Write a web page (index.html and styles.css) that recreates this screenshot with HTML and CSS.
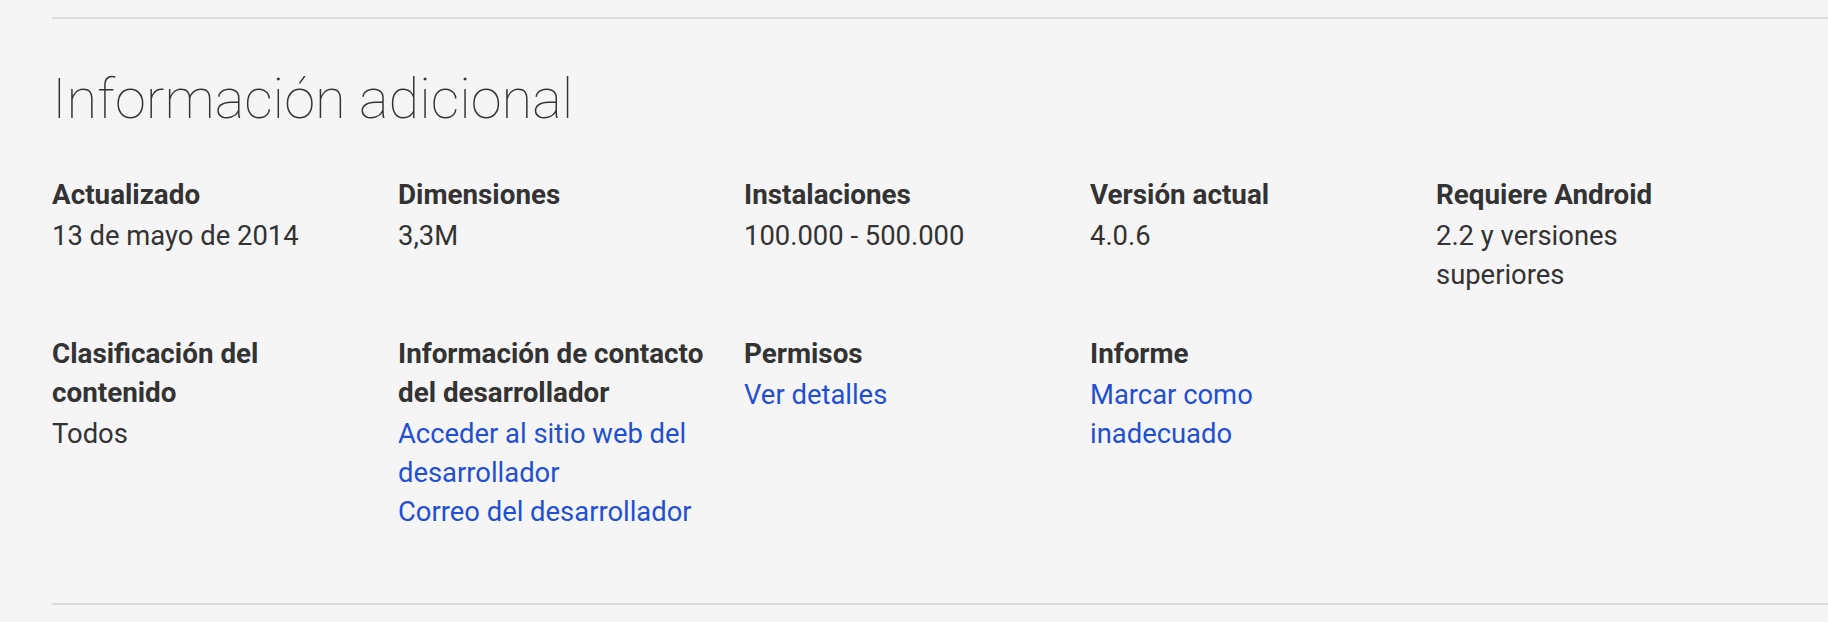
FILE: index.html
```html
<!DOCTYPE html>
<html lang="es">
<head>
<meta charset="utf-8">
<title>Información adicional</title>
<link rel="stylesheet" href="styles.css">
</head>
<body>
<section class="details">
  <div class="rule"></div>
  <h2 class="title">Información adicional</h2>
  <div class="meta-grid">
    <div class="meta">
      <div class="meta-title">Actualizado</div>
      <div class="meta-value">13 de mayo de 2014</div>
    </div>
    <div class="meta">
      <div class="meta-title">Dimensiones</div>
      <div class="meta-value">3,3M</div>
    </div>
    <div class="meta">
      <div class="meta-title">Instalaciones</div>
      <div class="meta-value">100.000 - 500.000</div>
    </div>
    <div class="meta">
      <div class="meta-title">Versión actual</div>
      <div class="meta-value">4.0.6</div>
    </div>
    <div class="meta">
      <div class="meta-title">Requiere Android</div>
      <div class="meta-value">2.2 y versiones superiores</div>
    </div>
    <div class="meta">
      <div class="meta-title">Clasificación del contenido</div>
      <div class="meta-value">Todos</div>
    </div>
    <div class="meta">
      <div class="meta-title">Información de contacto del desarrollador</div>
      <a class="meta-link" href="#">Acceder al sitio web del desarrollador</a>
      <a class="meta-link" href="#">Correo del desarrollador</a>
    </div>
    <div class="meta">
      <div class="meta-title">Permisos</div>
      <a class="meta-link" href="#">Ver detalles</a>
    </div>
    <div class="meta">
      <div class="meta-title">Informe</div>
      <a class="meta-link" href="#">Marcar como inadecuado</a>
    </div>
  </div>
  <div class="rule rule-bottom"></div>
</section>
</body>
</html>
```

FILE: styles.css
```css
html, body {
  margin: 0;
  padding: 0;
  background: #f5f5f5;
}

body {
  font-family: Roboto, "Noto Sans", Arial, sans-serif;
  color: #333333;
}

.details {
  padding: 17px 0 0 52px;
}

.rule {
  height: 2px;
  background: #dcdcdc;
}

.title {
  margin: 48px 0 0 0;
  font-size: 56px;
  font-weight: 100;
  line-height: 64px;
  color: #333333;
  letter-spacing: 0;
}

.meta-grid {
  display: grid;
  grid-template-columns: repeat(5, 308px);
  column-gap: 38px;
  row-gap: 39px;
  margin-top: 44px;
}

.meta {
  display: flex;
  flex-direction: column;
  align-items: flex-start;
  font-size: 27.4px;
  line-height: 39px;
}

.meta-title {
  font-size: 27.8px;
  font-weight: 700;
  color: #333333;
  padding-bottom: 3px;
}

.meta-value {
  color: #333333;
}

.meta-link {
  color: #1f50d3;
  text-decoration: none;
}

.rule-bottom {
  margin-top: 71px;
}
```
